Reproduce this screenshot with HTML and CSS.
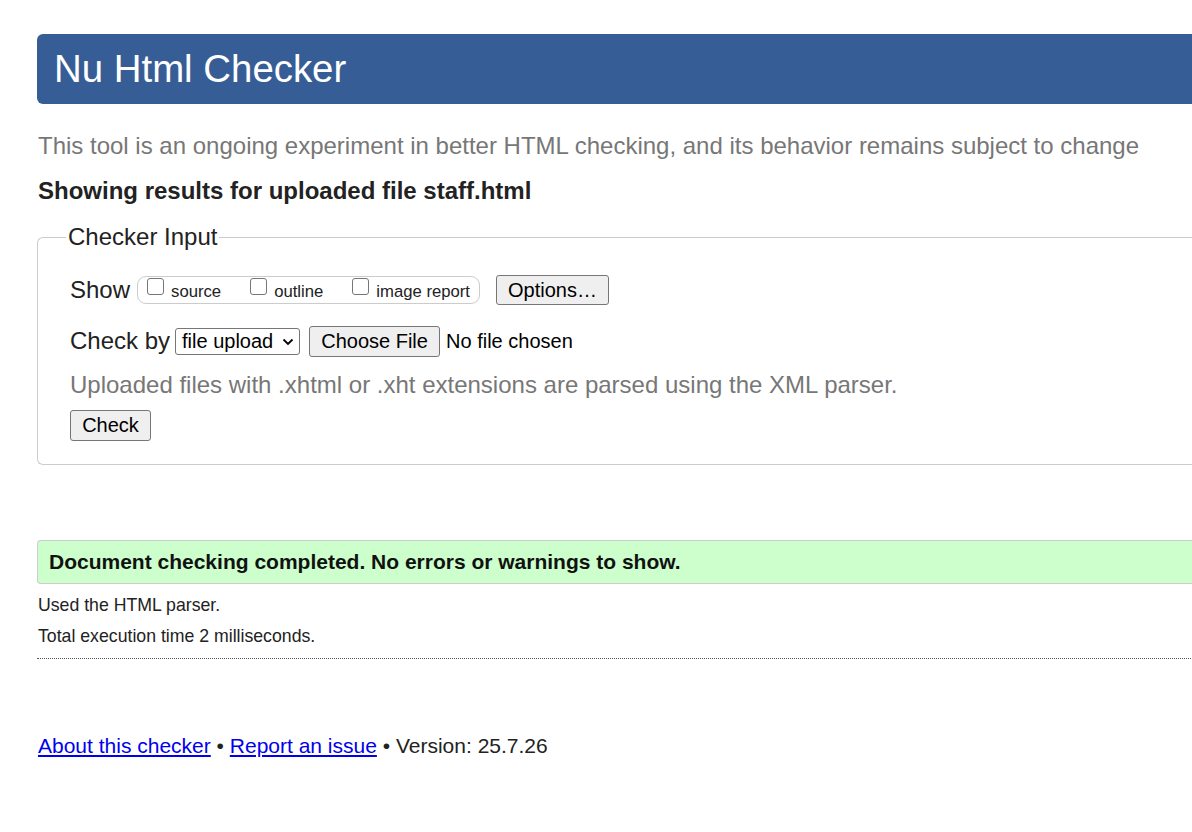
FILE: index.html
```html
<!DOCTYPE html>
<html lang="en">
<head>
<meta charset="utf-8">
<title>Nu Html Checker</title>
<link rel="stylesheet" href="styles.css">
</head>
<body>
<div class="page">
  <h1 class="banner">Nu Html Checker</h1>
  <p class="intro">This tool is an ongoing experiment in better HTML checking, and its behavior remains subject to change</p>
  <p class="showing">Showing results for uploaded file staff.html</p>
  <fieldset class="input">
    <legend>Checker Input</legend>
    <div class="row">
      <span class="label">Show</span>
      <span class="pill">
        <label class="opt"><span class="box"></span>source</label>
        <label class="opt"><span class="box"></span>outline</label>
        <label class="opt"><span class="box"></span>image report</label>
      </span>
      <span class="btn options">Options…</span>
    </div>
    <div class="row row2">
      <span class="label">Check by</span>
      <span class="select">file upload<svg class="chev" width="12" height="8" viewBox="0 0 12 8"><path d="M1.5 1.5 L6 6 L10.5 1.5" fill="none" stroke="#000" stroke-width="1.8"/></svg></span>
      <span class="btn choose">Choose File</span>
      <span class="nofile">No file chosen</span>
    </div>
    <p class="hint">Uploaded files with .xhtml or .xht extensions are parsed using the XML parser.</p>
    <span class="btn check">Check</span>
  </fieldset>
  <div class="success">Document checking completed. No errors or warnings to show.</div>
  <p class="meta first">Used the HTML parser.</p>
  <p class="meta">Total execution time 2 milliseconds.</p>
  <hr class="sep">
  <p class="footer"><a href="#">About this checker</a> • <a href="#">Report an issue</a> • Version: 25.7.26</p>
</div>
</body>
</html>
```
FILE: styles.css
```css
html, body {
  margin: 0;
  padding: 0;
  background: #fff;
  overflow: hidden;
}
body {
  font-family: "Liberation Sans", Arial, sans-serif;
  color: #111;
}
.page {
  width: 1300px;
  padding: 34px 0 0 37px;
}
.banner {
  margin: 0;
  height: 70px;
  background: #365d95;
  color: #fff;
  font-weight: normal;
  font-size: 38.4px;
  line-height: 70px;
  padding-left: 17px;
  border-radius: 6px 0 0 6px;
}
.intro {
  margin: 27px 0 0 1px;
  font-size: 24px;
  line-height: 30px;
  color: #777;
}
.showing {
  margin: 16px 0 0 1px;
  font-size: 24px;
  line-height: 28px;
  font-weight: bold;
  color: #222;
}
.input {
  margin: 19px 0 0 0;
  padding: 6px 32px 23px 32px;
  border: 1px solid #ccc;
  border-right: none;
  border-radius: 6px 0 0 6px;
}
.input legend {
  font-size: 24px;
  line-height: 26px;
  padding: 0 2px;
  margin-left: -4px;
  color: #222;
}
.row {
  display: flex;
  align-items: center;
  height: 30px;
  margin-top: 19px;
}
.label {
  font-size: 24px;
  color: #222;
  margin-right: 7px;
}
.pill {
  display: inline-flex;
  align-items: center;
  height: 26px;
  border: 1px solid #ccc;
  border-radius: 9px;
  padding: 0 9px 0 9px;
  gap: 29px;
}
.opt {
  display: inline-flex;
  align-items: flex-end;
  font-size: 16.7px;
  line-height: 18px;
  color: #222;
  height: 22px;
  padding-top: 2px;
  box-sizing: border-box;
}
.box {
  display: inline-block;
  width: 17px;
  height: 17px;
  border: 1.5px solid #767676;
  border-radius: 3px;
  box-sizing: border-box;
  margin-right: 7px;
  align-self: flex-start;
  margin-top: -3px;
}
.btn {
  display: inline-flex;
  align-items: center;
  justify-content: center;
  box-sizing: border-box;
  border: 1px solid #767676;
  border-radius: 3px;
  background: #efefef;
  font-size: 20px;
  color: #000;
}
.options {
  margin-left: 16px;
  width: 113px;
  height: 30px;
}
.row2 {
  margin-top: 21px;
}
.select {
  display: inline-flex;
  align-items: center;
  justify-content: space-between;
  box-sizing: border-box;
  width: 125px;
  height: 27px;
  border: 1px solid #767676;
  border-radius: 3px;
  font-size: 20px;
  color: #000;
  padding: 0 5px 0 6px;
  margin-left: -2px;
}
.chev {
  margin-top: 1px;
}
.choose {
  margin-left: 9px;
  width: 131px;
  height: 31px;
}
.nofile {
  font-size: 20px;
  margin-left: 6px;
  color: #000;
}
.hint {
  margin: 15px 0 0 0;
  font-size: 24px;
  line-height: 28px;
  color: #777;
}
.check {
  margin-top: 11px;
  width: 81px;
  height: 31px;
}
.success {
  margin-top: 75px;
  height: 42px;
  background: #ccffcc;
  border: 1px solid #ccc;
  border-right: none;
  border-radius: 4px 0 0 4px;
  font-size: 21px;
  font-weight: bold;
  line-height: 42px;
  padding-left: 11px;
  color: #111;
}
.meta {
  margin: 0 0 0 1px;
  font-size: 17.7px;
  line-height: 31px;
  color: #222;
}
.meta.first {
  margin-top: 6px;
}
.sep {
  margin: 6px 0 0 0;
  border: none;
  border-top: 1px dotted #555;
  height: 0;
}
.footer {
  margin: 75px 0 0 1px;
  font-size: 21px;
  color: #222;
}
.footer a {
  color: #0000ee;
}
```
